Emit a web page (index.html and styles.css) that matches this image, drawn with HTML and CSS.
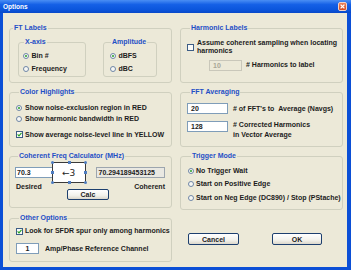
FILE: index.html
```html
<!DOCTYPE html>
<html lang="en">
<head>
  <meta charset="UTF-8">
  <title>Options</title>
  <link rel="stylesheet" href="styles.css">
</head>
<body>

  <div class="window">
    <div class="titlebar">
      <span class="title">Options</span>
      <span class="close">
        <svg width="9" height="9" viewBox="0 0 9 9"><path d="M2.6 2.6l3.8 3.8M6.4 2.6l-3.8 3.8" stroke="#fff" stroke-width="1.3"/></svg>
      </span>
    </div>

    <div class="content">
      <div class="col">

        <fieldset class="group g-ft">
          <legend>FT Labels</legend>
          <div class="ft-body">
            <fieldset class="group sub g-xaxis">
              <legend>X-axis</legend>
              <div class="opt"><span class="radio on"></span>Bin #</div>
              <div class="opt"><span class="radio"></span>Frequency</div>
            </fieldset>
            <fieldset class="group sub g-amp">
              <legend>Amplitude</legend>
              <div class="opt"><span class="radio on"></span>dBFS</div>
              <div class="opt"><span class="radio"></span>dBC</div>
            </fieldset>
          </div>
        </fieldset>

        <fieldset class="group g-color">
          <legend>Color Highlights</legend>
          <div class="opt"><span class="radio on"></span>Show noise-exclusion region in RED</div>
          <div class="opt"><span class="radio"></span>Show harmonic bandwidth in RED</div>
          <div class="opt check-row"><span class="check on"><svg width="5" height="5" viewBox="0 0 5 5"><path d="M0.6 2.4l1.4 1.5 2.5-3" fill="none" stroke="#21a121" stroke-width="1.1"/></svg></span>Show average noise-level line in YELLOW</div>
        </fieldset>

        <fieldset class="group g-coh">
          <legend>Coherent Freq Calculator (MHz)</legend>
          <div class="coh-row">
            <div class="field f-desired">70.3</div>
            <div class="sel">
              <span class="arrow">&larr;3</span>
              <span class="handle h-tl"></span><span class="handle h-tm"></span><span class="handle h-tr"></span>
              <span class="handle h-ml"></span><span class="handle h-mr"></span>
              <span class="handle h-bl"></span><span class="handle h-bm"></span><span class="handle h-br"></span>
            </div>
            <div class="field readonly f-coherent">70.294189453125</div>
          </div>
          <div class="coh-labels">
            <span>Desired</span>
            <button class="btn btn-calc">Calc</button>
            <span>Coherent</span>
          </div>
        </fieldset>

        <fieldset class="group g-other">
          <legend>Other Options</legend>
          <div class="opt"><span class="check on"><svg width="5" height="5" viewBox="0 0 5 5"><path d="M0.6 2.4l1.4 1.5 2.5-3" fill="none" stroke="#21a121" stroke-width="1.1"/></svg></span>Look for SFDR spur only among harmonics</div>
          <div class="field-row">
            <div class="field f-chan">1</div>
            <span>Amp/Phase Reference Channel</span>
          </div>
        </fieldset>

      </div>

      <div class="col">

        <fieldset class="group g-harm">
          <legend>Harmonic Labels</legend>
          <div class="multi-check">
            <span class="check"></span>
            <span class="multi-text">Assume coherent sampling when locating<br>harmonics</span>
          </div>
          <div class="field-row harm-row">
            <div class="field disabled f-harm">10</div>
            <span># Harmonics to label</span>
          </div>
        </fieldset>

        <fieldset class="group g-fft">
          <legend>FFT Averaging</legend>
          <div class="field-row">
            <div class="field f-avg">20</div>
            <span># of FFT's to &nbsp;Average (Navgs)</span>
          </div>
          <div class="field-row fft-row2">
            <div class="field f-avg">128</div>
            <span class="two-line"># Corrected Harmonics<br>in Vector Average</span>
          </div>
        </fieldset>

        <fieldset class="group g-trig">
          <legend>Trigger Mode</legend>
          <div class="opt"><span class="radio on"></span>No Trigger Wait</div>
          <div class="opt"><span class="radio"></span>Start on Positive Edge</div>
          <div class="opt"><span class="radio"></span>Start on Neg Edge (DC890) / Stop (PStache)</div>
        </fieldset>

        <div class="buttons">
          <button class="btn btn-cancel">Cancel</button>
          <button class="btn btn-ok">OK</button>
        </div>

      </div>
    </div>
  </div>

</body>
</html>
```

FILE: styles.css
```css
* {
  box-sizing: border-box;
}

body {
  margin: 0;
  font-family: "Liberation Sans", Arial, sans-serif;
  font-size: 7px;
  font-weight: bold;
  line-height: 8px;
  color: #1c1c1c;
}

.window {
  width: 351px;
  height: 270px;
  background: #0b4fd6;
  display: flex;
  flex-direction: column;
}

.titlebar {
  height: 13px;
  flex: none;
  display: flex;
  align-items: center;
  justify-content: space-between;
  padding: 0 4px 0 3px;
  background: linear-gradient(#4a8ef4, #1560e6 35%, #0b55dc 75%, #0848c8);
  color: white;
}

.title {
  font-size: 6.5px;
}

.close {
  width: 9px;
  height: 9px;
  display: flex;
  border: 1px solid #f4d2c4;
  border-radius: 2px;
  background: linear-gradient(#e8825c, #d4481c);
}

.close svg {
  margin: -1px;
}

.content {
  flex: 1;
  margin: 0 4px 3px 3px;
  background: #ece9d8;
  display: flex;
  gap: 8px;
  padding: 10px 0 0 6px;
}

.col {
  width: 163px;
  display: flex;
  flex-direction: column;
  gap: 4px;
}

/* group boxes */

.group {
  margin: 0;
  padding: 0;
  min-inline-size: 0;
  border: 1px solid #d0d0bf;
  border-radius: 3px;
}

.group legend {
  margin-left: 3px;
  padding: 0 1px;
  line-height: 10px;
  color: #1f4fc6;
}

.group.sub legend {
  margin-left: 1px;
}

.g-ft { height: 60px; }
.g-color { height: 60px; padding: 5px 0 0 6px; }
.g-coh { height: 57px; padding: 1px 6px 0 5px; }
.g-other { height: 49px; margin-top: 1px; padding: 4px 0 0 6px; }
.g-harm { height: 60px; padding: 6px 0 0 6px; }
.g-fft { height: 60px; padding: 6px 0 0 6px; }
.g-trig { height: 59px; padding: 3px 0 0 7px; }

/* options */

.opt {
  display: flex;
  align-items: center;
  gap: 3px;
  height: 11.5px;
  white-space: nowrap;
}

.radio {
  width: 6px;
  height: 6px;
  flex: none;
  border: 1px solid #6f86a6;
  border-radius: 50%;
  background: #f7f7f4;
  display: flex;
  align-items: center;
  justify-content: center;
}

.radio.on::after {
  content: "";
  width: 2px;
  height: 2px;
  border-radius: 50%;
  background: #27a027;
}

.check {
  width: 7px;
  height: 7px;
  flex: none;
  border: 1px solid #3d5d86;
  background: #fbfbf8;
  display: flex;
  align-items: center;
  justify-content: center;
}

.check-row {
  margin-top: 4px;
  gap: 2px;
}

/* FT Labels */

.ft-body {
  display: flex;
  gap: 17px;
  padding: 4px 0 0 8px;
}

.g-xaxis {
  width: 68px;
  height: 40px;
  padding: 3px 0 0 4px;
}

.g-amp {
  width: 54px;
  height: 40px;
  padding: 3px 0 0 6px;
}

.g-xaxis .opt,
.g-amp .opt {
  height: 12.5px;
  gap: 2.5px;
}

/* text fields */

.field {
  height: 11px;
  padding: 0 3px;
  line-height: 9px;
  border: 1px solid #7f9db9;
  background: white;
  white-space: nowrap;
}

.field.disabled {
  border-color: #c9c7ba;
  background: #ece9d8;
  color: #a8a697;
}

.field.readonly {
  border-color: #9ca5ae;
  background: #e9e8e2;
}

.field-row {
  display: flex;
  align-items: center;
  white-space: nowrap;
}

/* Coherent freq calculator */

.coh-row {
  display: flex;
  align-items: center;
}

.f-desired {
  width: 38px;
  padding-left: 1px;
}

.sel {
  position: relative;
  width: 34px;
  height: 21px;
  margin-left: -1px;
  border: 1px solid #3a3a3a;
  background: white;
  display: flex;
  align-items: center;
  justify-content: center;
}

.arrow {
  font-family: "DejaVu Sans", sans-serif;
  font-weight: normal;
  font-size: 9px;
  color: #222;
}

.handle {
  position: absolute;
  width: 3px;
  height: 3px;
  border-radius: 50%;
  background: #4f7dc0;
}

.h-tl { left: -2px; top: -2px; }
.h-tm { left: 15px; top: -2px; border-radius: 0; }
.h-tr { right: -2px; top: -2px; }
.h-ml { left: -2px; top: 8px; border-radius: 0; }
.h-mr { right: -2px; top: 8px; border-radius: 0; }
.h-bl { left: -2px; bottom: -2px; }
.h-bm { left: 15px; bottom: -2px; border-radius: 0; }
.h-br { right: -2px; bottom: -2px; }

.f-coherent {
  width: 70px;
  margin-left: 10px;
  padding-left: 2px;
}

.coh-labels {
  display: flex;
  justify-content: space-between;
  align-items: flex-start;
  padding-left: 1px;
}

.btn-calc {
  width: 42px;
  height: 11px;
  margin-top: 6px;
}

/* buttons */

.btn {
  padding: 0;
  font: inherit;
  line-height: 9px;
  color: #1c1c1c;
  border: 1px solid #1d3f6e;
  border-radius: 2px;
  background: linear-gradient(#ffffff, #f3f2ec 60%, #dcd8cc);
}

.buttons {
  display: flex;
  gap: 33px;
  margin-top: 19px;
  padding-left: 8px;
}

.btn-cancel {
  width: 51px;
  height: 12px;
}

.btn-ok {
  width: 50px;
  height: 12px;
}

/* Other options */

.g-other .opt {
  height: 8px;
  gap: 2px;
}

.g-other .field-row {
  margin-top: 8px;
  gap: 6px;
}

.f-chan {
  width: 23px;
  text-align: center;
}

/* Harmonic labels */

.multi-check {
  display: flex;
  align-items: center;
  gap: 3px;
  white-space: nowrap;
}

.multi-text {
  line-height: 8.4px;
}

.harm-row {
  margin-top: 4px;
  padding-left: 22px;
  gap: 4px;
}

.f-harm {
  width: 33px;
}

/* FFT averaging */

.g-fft .field-row {
  gap: 5px;
}

.f-avg {
  width: 41px;
}

.fft-row2 {
  margin-top: 7px;
  align-items: flex-start;
}

.two-line {
  line-height: 10px;
  margin-top: -1px;
}

/* Trigger mode */

.g-trig .opt {
  height: 13.5px;
  gap: 2px;
}
```
